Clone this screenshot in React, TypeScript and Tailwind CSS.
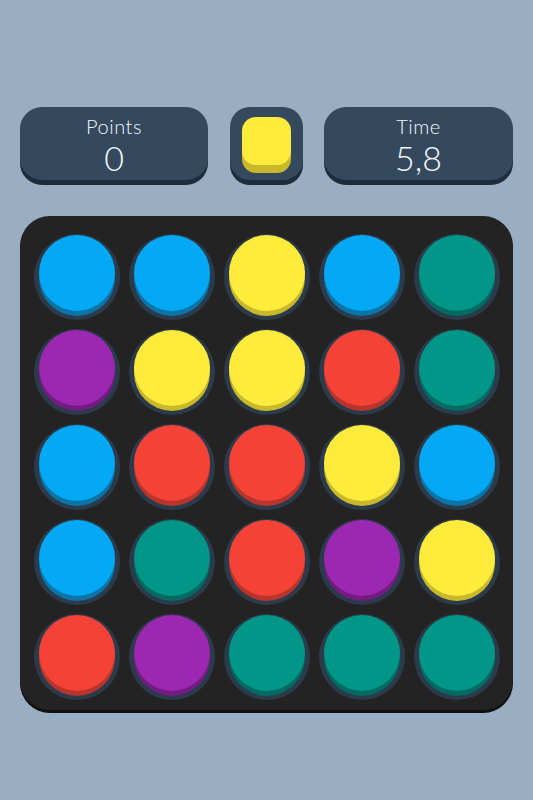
const board = [
  ["blue", "blue", "yellow", "blue", "teal"],
  ["purple", "yellow", "yellow", "red", "teal"],
  ["blue", "red", "red", "yellow", "blue"],
  ["blue", "teal", "red", "purple", "yellow"],
  ["red", "purple", "teal", "teal", "teal"],
];

const dotClass: Record<string, string> = {
  blue: "bg-[#03a9f4] shadow-[0_5px_0_0_#0b75a8,0_4px_0_5px_#2b3b4b]",
  yellow: "bg-[#ffeb3b] shadow-[0_5px_0_0_#c9b92a,0_4px_0_5px_#2b3b4b]",
  red: "bg-[#f44336] shadow-[0_5px_0_0_#b8352b,0_4px_0_5px_#2b3b4b]",
  teal: "bg-[#009688] shadow-[0_5px_0_0_#006b61,0_4px_0_5px_#2b3b4b]",
  purple: "bg-[#9c27b0] shadow-[0_5px_0_0_#721c82,0_4px_0_5px_#2b3b4b]",
};

function Stat({ label, value, width }: { label: string; value: string; width: string }) {
  return (
    <div
      className={`${width} h-[73px] rounded-[22px] bg-[#34495e] shadow-[0_5px_0_#1f2c39] flex flex-col items-center pt-[5px] text-[#f4f7f9] font-['Lato',sans-serif] font-light`}
    >
      <span className="text-[20px] leading-[28px] tracking-wide">{label}</span>
      <span className="text-[34px] leading-[36px]">{value}</span>
    </div>
  );
}

export default function App() {
  return (
    <div className="min-h-screen bg-[#9aaec3] px-[20px] pt-[107px]">
      <div className="flex justify-between">
        <Stat label="Points" value="0" width="w-[188px]" />
        <div className="w-[73px] h-[73px] rounded-[20px] bg-[#34495e] shadow-[0_5px_0_#1f2c39] flex justify-center pt-[10px]">
          <div className="w-[49px] h-[48px] rounded-[14px] bg-[#ffeb3b] shadow-[0_8px_0_#c9b92a]" />
        </div>
        <Stat label="Time" value="5,8" width="w-[189px]" />
      </div>

      <div className="mt-[36px] w-[493px] h-[494px] rounded-[30px] bg-[#232323] shadow-[0_3px_0_#111111] p-[9px] grid grid-cols-5">
        {board.flat().map((c, i) => (
          <div key={i} className="w-[95px] h-[95px] flex items-center justify-center">
            <div className={`w-[76px] h-[76px] rounded-full ${dotClass[c]}`} />
          </div>
        ))}
      </div>
    </div>
  );
}
